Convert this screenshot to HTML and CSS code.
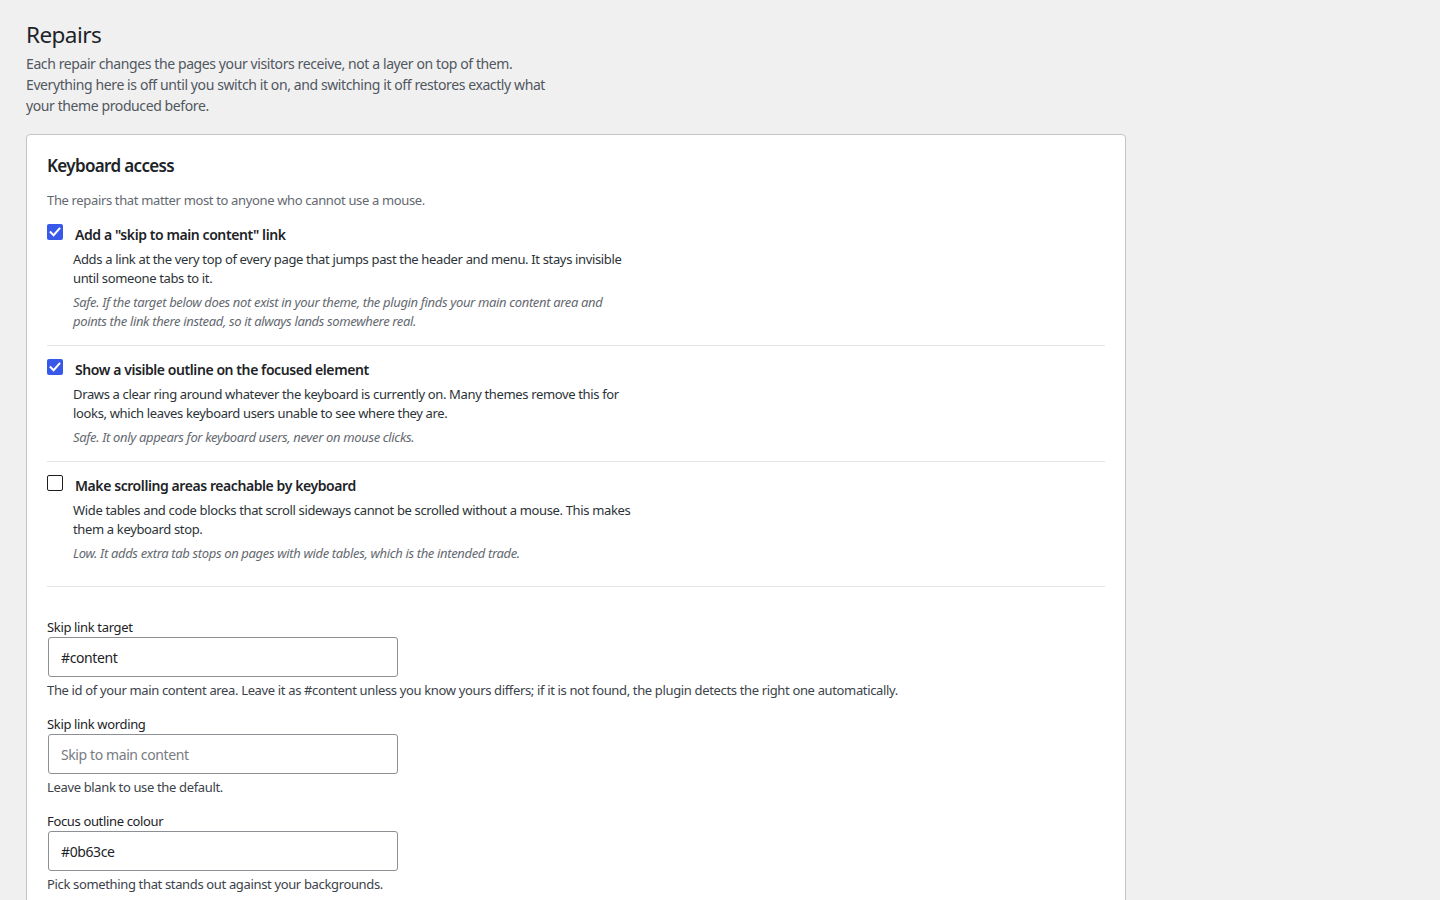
FILE: index.html
```html
<!DOCTYPE html>
<html lang="en">
<head>
<meta charset="utf-8">
<title>Repairs</title>
<link rel="stylesheet" href="styles.css">
</head>
<body>
<div class="wrap">
  <h1 class="page-title">Repairs</h1>
  <p class="page-intro">Each repair changes the pages your visitors receive, not a layer on top of them.<br>Everything here is off until you switch it on, and switching it off restores exactly what<br>your theme produced before.</p>

  <section class="card">
    <h2 class="card-title">Keyboard access</h2>
    <p class="card-sub">The repairs that matter most to anyone who cannot use a mouse.</p>

    <div class="repair">
      <div class="repair-head">
        <span class="box is-on"><svg viewBox="0 0 16 16" width="16" height="16"><path d="M3.6 8.2l3 3 5.8-6.6" fill="none" stroke="#fff" stroke-width="2" stroke-linecap="square"/></svg></span>
        <span class="repair-label">Add a "skip to main content" link</span>
      </div>
      <p class="repair-desc">Adds a link at the very top of every page that jumps past the header and menu. It stays invisible until someone tabs to it.</p>
      <p class="repair-risk">Safe. If the target below does not exist in your theme, the plugin finds your main content area and points the link there instead, so it always lands somewhere real.</p>
    </div>

    <div class="repair">
      <div class="repair-head">
        <span class="box is-on"><svg viewBox="0 0 16 16" width="16" height="16"><path d="M3.6 8.2l3 3 5.8-6.6" fill="none" stroke="#fff" stroke-width="2" stroke-linecap="square"/></svg></span>
        <span class="repair-label">Show a visible outline on the focused element</span>
      </div>
      <p class="repair-desc">Draws a clear ring around whatever the keyboard is currently on. Many themes remove this for looks, which leaves keyboard users unable to see where they are.</p>
      <p class="repair-risk">Safe. It only appears for keyboard users, never on mouse clicks.</p>
    </div>

    <div class="repair repair-last">
      <div class="repair-head">
        <span class="box"></span>
        <span class="repair-label">Make scrolling areas reachable by keyboard</span>
      </div>
      <p class="repair-desc">Wide tables and code blocks that scroll sideways cannot be scrolled without a mouse. This makes them a keyboard stop.</p>
      <p class="repair-risk">Low. It adds extra tab stops on pages with wide tables, which is the intended trade.</p>
    </div>

    <div class="fields">
      <div class="field">
        <label class="field-label" for="skip-target">Skip link target</label>
        <input class="field-input" id="skip-target" type="text" value="#content">
        <p class="field-help">The id of your main content area. Leave it as #content unless you know yours differs; if it is not found, the plugin detects the right one automatically.</p>
      </div>
      <div class="field">
        <label class="field-label" for="skip-wording">Skip link wording</label>
        <input class="field-input" id="skip-wording" type="text" placeholder="Skip to main content">
        <p class="field-help">Leave blank to use the default.</p>
      </div>
      <div class="field">
        <label class="field-label" for="focus-colour">Focus outline colour</label>
        <input class="field-input" id="focus-colour" type="text" value="#0b63ce">
        <p class="field-help">Pick something that stands out against your backgrounds.</p>
      </div>
    </div>
  </section>
</div>
</body>
</html>
```

FILE: styles.css
```css
* { box-sizing: border-box; }

html, body {
  margin: 0;
  background: #f0f0f1;
}

body {
  font-family: "Noto Sans", "Open Sans", sans-serif;
  color: #3c434a;
  font-size: 13px;
  letter-spacing: -0.35px;
}

.wrap {
  padding: 20px 26px 40px;
}

.page-title {
  margin: 0;
  font-size: 22.5px;
  line-height: 30px;
  font-weight: 400;
  letter-spacing: -0.55px;
  color: #1d2327;
}

.page-intro {
  margin: 3px 0 0;
  font-size: 14px;
  line-height: 21px;
  letter-spacing: -0.4px;
  color: #50575e;
}

.card {
  margin-top: 18px;
  width: 1100px;
  background: #fff;
  border: 1px solid #c3c4c7;
  border-radius: 4px;
  padding: 19px 20px 20px;
}

.card-title {
  margin: 0;
  font-size: 17px;
  line-height: 24px;
  font-weight: 600;
  letter-spacing: -0.65px;
  color: #1d2327;
}

.card-sub {
  margin: 13px 0 0;
  font-size: 13px;
  line-height: 19px;
  color: #646970;
}

.repair {
  padding: 13px 0 14px;
  border-bottom: 1px solid #e5e5e5;
}

.card-sub + .repair {
  padding-top: 14px;
}

.repair-last {
  padding-bottom: 23px;
}

.repair-head {
  display: flex;
  align-items: flex-start;
  gap: 12px;
}

.box {
  flex: none;
  width: 16px;
  height: 16px;
  border: 1.5px solid #1e1e1e;
  border-radius: 2px;
  background: #fff;
  display: flex;
  align-items: center;
  justify-content: center;
}

.box.is-on {
  border: 0;
  background: #3858e9;
}

.repair-label {
  margin-top: 1px;
  font-size: 14px;
  line-height: 20px;
  font-weight: 600;
  letter-spacing: -0.42px;
  color: #1d2327;
}

.repair-desc {
  margin: 5px 0 0 26px;
  max-width: 562px;
  font-size: 13px;
  line-height: 19px;
  color: #2c3338;
}

.repair-risk {
  margin: 5px 0 0 26px;
  max-width: 562px;
  font-size: 13px;
  line-height: 19px;
  font-style: italic;
  color: #646970;
}

.fields {
  padding-top: 31px;
}

.field + .field {
  margin-top: 15px;
}

.field-label {
  display: block;
  font-size: 13px;
  line-height: 19px;
  color: #1d2327;
}

.field-input {
  display: block;
  margin: 0 0 0 1px;
  width: 350px;
  height: 40px;
  padding: 0 12px;
  border: 1px solid #8c8f94;
  border-radius: 3px;
  background: #fff;
  font-family: inherit;
  font-size: 14px;
  letter-spacing: -0.4px;
  color: #1d2327;
}

.field-input::placeholder {
  color: #787c82;
}

.field-help {
  margin: 4px 0 0;
  font-size: 13px;
  line-height: 19px;
  color: #3c434a;
}
```
